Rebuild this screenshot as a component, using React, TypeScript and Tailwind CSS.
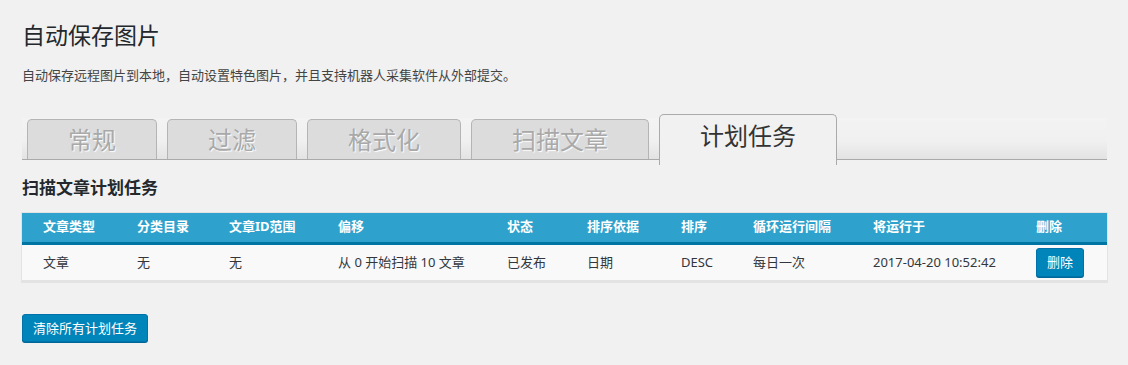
const tabs = [
  { label: "常规", active: false },
  { label: "过滤", active: false },
  { label: "格式化", active: false },
  { label: "扫描文章", active: false },
  { label: "计划任务", active: true },
];

const columns = [
  { title: "文章类型", width: "93px" },
  { title: "分类目录", width: "92px" },
  { title: "文章ID范围", width: "109px" },
  { title: "偏移", width: "169px" },
  { title: "状态", width: "80px" },
  { title: "排序依据", width: "94px" },
  { title: "排序", width: "72px" },
  { title: "循环运行间隔", width: "120px" },
  { title: "将运行于", width: "163px" },
  { title: "删除", width: "93px" },
];

const row = ["文章", "无", "无", "从 0 开始扫描 10 文章", "已发布", "日期", "DESC", "每日一次", "2017-04-20 10:52:42"];

function TabNav() {
  return (
    <nav className="mt-[29px] ml-px mr-px flex h-[46px] items-end gap-[10px] border-b border-[#aaaaaa] bg-[linear-gradient(to_bottom,transparent_4px,#f3f3f3_4px,#f0f0f0_60%,#e3e3e3)] pl-[5px]">
      {tabs.map((tab) =>
        tab.active ? (
          <a
            key={tab.label}
            className="relative -mb-[6px] h-[51px] rounded-t-[5px] border-x border-t border-[#aaaaaa] bg-[#f1f1f1] px-[40px] pt-[6px] text-[24px] leading-[30px] text-[#333333]"
          >
            {tab.label}
          </a>
        ) : (
          <a
            key={tab.label}
            className="h-10 rounded-t-[5px] border-x border-t border-[#b4b4b4] bg-[#dcdcdc] px-[40px] pt-[5px] text-[24px] leading-[30px] text-[#a9a9a9] [text-shadow:1px_1px_1px_#ffffff]"
          >
            {tab.label}
          </a>
        )
      )}
    </nav>
  );
}

function TaskTable() {
  return (
    <div className="mt-[12px] border-x border-t border-b-[3px] border-[#e3e3e3]">
      <table className="w-full table-fixed border-collapse text-left text-[13px]">
        <colgroup>
          {columns.map((col) => (
            <col key={col.title} style={{ width: col.width }} />
          ))}
        </colgroup>
        <thead className="bg-[#2ea2cc] text-white">
          <tr className="h-[30px] border-b-[3px] border-[#0074a2]">
            {columns.map((col, i) => (
              <th key={col.title} className={`${i === 0 ? "pl-[21px]" : "pl-[22px]"} pb-[2px] font-bold`}>
                {col.title}
              </th>
            ))}
          </tr>
        </thead>
        <tbody className="bg-[#f9f9f9] text-[#32373c]">
          <tr className="h-[37px]">
            {row.map((cell, i) => (
              <td key={i} className={`${i === 0 ? "pl-[21px]" : "pl-[22px]"} whitespace-nowrap`}>
                {cell}
              </td>
            ))}
            <td className="pl-[22px]">
              <button className="h-[29px] rounded-[3px] border border-[#0073aa] bg-[#0085ba] px-[10px] text-[13px] leading-[26px] text-white shadow-[0_1px_0_#006799]">
                删除
              </button>
            </td>
          </tr>
        </tbody>
      </table>
    </div>
  );
}

export default function App() {
  return (
    <div className="min-h-[365px] bg-[#f1f1f1] font-['Noto_Sans','Noto_Sans_CJK_SC',sans-serif]">
      <div className="ml-[21px] mr-[20px] pt-[21px]">
        <h1 className="pl-px text-[23px] leading-[29px] text-[#23282d]">自动保存图片</h1>
        <p className="mt-[15px] pl-px text-[13px] leading-[20px] text-[#444444]">
          自动保存远程图片到本地，自动设置特色图片，并且支持机器人采集软件从外部提交。
        </p>
        <TabNav />
        <h2 className="mt-[16px] pl-px text-[17px] font-bold leading-[24px] text-[#23282d]">扫描文章计划任务</h2>
        <TaskTable />
        <button className="mt-[31px] ml-px h-[28px] rounded-[3px] border border-[#0073aa] bg-[#0085ba] px-[10px] text-[13px] leading-[25px] text-white shadow-[0_1px_0_#006799]">
          清除所有计划任务
        </button>
      </div>
    </div>
  );
}
